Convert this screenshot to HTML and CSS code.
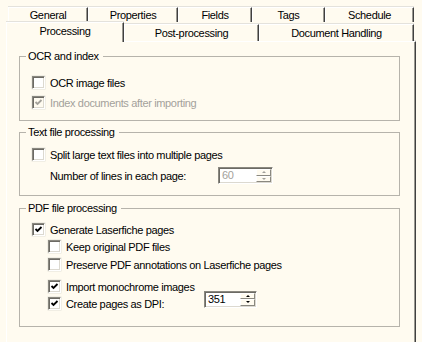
FILE: index.html
```html
<!DOCTYPE html>
<html lang="en">
<head>
   <meta charset="UTF-8">
   <title>Processing</title>
   <link rel="stylesheet" href="styles.css">
</head>
<body>
   <div class="dialog">
      <div class="tab-row upper">
         <div class="tab w-general">General</div>
         <div class="tab w-props">Properties</div>
         <div class="tab w-fields">Fields</div>
         <div class="tab w-tags">Tags</div>
         <div class="tab w-sched">Schedule</div>
      </div>
      <div class="tab-row lower">
         <div class="tab active w-proc">Processing</div>
         <div class="tab w-post">Post-processing</div>
         <div class="tab w-doc">Document Handling</div>
      </div>
      <div class="panel">
         <fieldset class="group g-ocr">
            <legend>OCR and index</legend>
            <div class="opt m13"><span class="cb"></span>OCR image files</div>
            <div class="opt m7 disabled">
               <span class="cb cb-off"><svg viewBox="0 0 9 9" width="9" height="9"><path d="M1.5 4 L3.5 6 L7.5 2" /></svg></span>Index documents after importing
            </div>
         </fieldset>

         <fieldset class="group g-text">
            <legend>Text file processing</legend>
            <div class="opt m9"><span class="cb"></span>Split large text files into multiple pages</div>
            <div class="opt m6 field-row">
               <span class="field-label lines-label">Number of lines in each page:</span>
               <div class="spin spin-off">
                  <span class="spin-value">60</span>
                  <span class="spin-btns"><span class="spin-btn"><i class="up"></i></span><span class="spin-btn"><i class="down"></i></span></span>
               </div>
            </div>
         </fieldset>

         <fieldset class="group g-pdf">
            <legend>PDF file processing</legend>
            <div class="opt m8"><span class="cb"><svg viewBox="0 0 9 9" width="9" height="9"><path d="M1.5 4 L3.5 6 L7.5 2" /></svg></span>Generate Laserfiche pages</div>
            <div class="opt m4 sub"><span class="cb"></span>Keep original PDF files</div>
            <div class="opt m5 sub"><span class="cb"></span>Preserve PDF annotations on Laserfiche pages</div>
            <div class="opt m9 sub"><span class="cb"><svg viewBox="0 0 9 9" width="9" height="9"><path d="M1.5 4 L3.5 6 L7.5 2" /></svg></span>Import monochrome images</div>
            <div class="opt m4 sub">
               <span class="cb"><svg viewBox="0 0 9 9" width="9" height="9"><path d="M1.5 4 L3.5 6 L7.5 2" /></svg></span>
               <span class="field-label dpi-label">Create pages as DPI:</span>
               <div class="spin dpi-spin">
                  <span class="spin-value">351</span>
                  <span class="spin-btns"><span class="spin-btn"><i class="up"></i></span><span class="spin-btn"><i class="down"></i></span></span>
               </div>
            </div>
         </fieldset>
      </div>
   </div>
</body>
</html>
```

FILE: styles.css
```css
body {
   margin: 0;
   padding: 0;
   background-color: #fffbf0;
   color: #000;
   font-family: "Liberation Sans", Arial, sans-serif;
   font-size: 11px;
   letter-spacing: -0.35px;
   overflow: hidden;
}

.dialog {
   padding-top: 7px;
}

/* tabs */

.tab-row {
   display: flex;
}

.upper {
   margin-left: 8px;
   height: 15px;
}

.lower {
   margin-left: 6px;
   height: 19px;
   align-items: flex-end;
}

.tab {
   box-sizing: border-box;
   border-top: 1px solid #fff;
   border-left: 1px solid #fff;
   border-right: 1px solid #404040;
   box-shadow: inset -1px 0 #9a9890, 0 -1px #e4e2dc;
   text-align: center;
   white-space: nowrap;
   background-color: #fffbf0;
}

.upper .tab {
   height: 15px;
   line-height: 14px;
}

.lower .tab {
   height: 17px;
   line-height: 16px;
}

.lower .tab.active {
   height: 20px;
   margin-bottom: -1px;
   position: relative;
   z-index: 1;
   line-height: 16px;
}

.w-general { width: 80px; }
.w-props { width: 90px; }
.w-fields { width: 74px; }
.w-tags { width: 73px; }
.w-sched { width: 89px; }
.w-proc { width: 118px; }
.w-post { width: 135px; }
.w-doc { width: 155px; }

/* panel */

.panel {
   box-sizing: border-box;
   width: 410px;
   height: 301px;
   margin-left: 6px;
   padding-top: 8px;
   border-top: 1px solid #fff;
   border-left: 1px solid #fff;
   border-right: 1px solid #404040;
   box-shadow: inset -1px 0 #9a9890, 0 -1px #e4e2dc;
}

.group {
   box-sizing: border-box;
   width: 381px;
   margin: 0 0 0 12px;
   padding: 0 0 11px 12px;
   border: 1px solid #b6b3ab;
   min-inline-size: 0;
}

.group legend {
   margin-left: -6px;
   padding: 0 4px 0 2px;
   line-height: 13px;
}

.g-text { margin-top: 5px; }
.g-pdf { margin-top: 6px; padding-bottom: 16px; }

/* options */

.opt {
   display: flex;
   align-items: center;
   height: 13px;
   white-space: nowrap;
}

.m4 { margin-top: 4px; }
.m5 { margin-top: 5px; }
.m6 { margin-top: 6px; }
.m7 { margin-top: 7px; }
.m8 { margin-top: 8px; }
.m9 { margin-top: 9px; }
.m13 { margin-top: 13px; }

.sub {
   padding-left: 16px;
}

.disabled {
   color: #a3a19b;
}

.cb {
   box-sizing: border-box;
   flex: none;
   width: 13px;
   height: 13px;
   margin-right: 5px;
   display: flex;
   align-items: center;
   justify-content: center;
   background-color: #fff;
   border-top: 1px solid #8a8880;
   border-left: 1px solid #8a8880;
   border-bottom: 1px solid #fff;
   border-right: 1px solid #fff;
   box-shadow: inset 1px 1px #6c6a64, inset -1px -1px #dcd9d0, 0 0 0 0.5px #e4e1d8;
}

.cb svg path {
   fill: none;
   stroke: #000;
   stroke-width: 1.8;
}

.cb-off {
   background-color: #fffbf0;
}

.cb-off svg path {
   stroke: #a3a19b;
}

/* spin boxes */

.field-label {
   flex: none;
}

.lines-label {
   width: 168px;
   margin-left: 18px;
}

.dpi-label {
   width: 138px;
}

.field-row {
   height: 17px;
}

.spin {
   box-sizing: border-box;
   display: flex;
   height: 17px;
   width: 55px;
   background-color: #fff;
   border-top: 1px solid #8a8880;
   border-left: 1px solid #8a8880;
   border-bottom: 1px solid #fff;
   border-right: 1px solid #fff;
   box-shadow: inset 1px 1px #6c6a64, inset -1px -1px #dcd9d0;
   padding: 1px 1px 1px 1px;
}

.dpi-spin {
   width: 53px;
   margin-top: -9px;
}

.spin-off {
   color: #a3a19b;
}

.spin-value {
   flex: 1;
   padding-left: 2px;
   line-height: 13px;
}

.spin-btns {
   display: flex;
   flex-direction: column;
   width: 15px;
}

.spin-btn {
   flex: 1;
   display: flex;
   align-items: center;
   justify-content: center;
   background-color: #fffbf0;
   border-top: 1px solid #fff;
   border-left: 1px solid #fff;
   border-bottom: 1px solid #8a8880;
   border-right: 1px solid #8a8880;
}

.spin-btn i {
   display: block;
   width: 0;
   height: 0;
   border-left: 2px solid transparent;
   border-right: 2px solid transparent;
}

.spin-btn .up {
   border-bottom: 2px solid #000;
}

.spin-btn .down {
   border-top: 2px solid #000;
}

.spin-off .spin-btn .up {
   border-bottom-color: #a3a19b;
}

.spin-off .spin-btn .down {
   border-top-color: #a3a19b;
}
```
